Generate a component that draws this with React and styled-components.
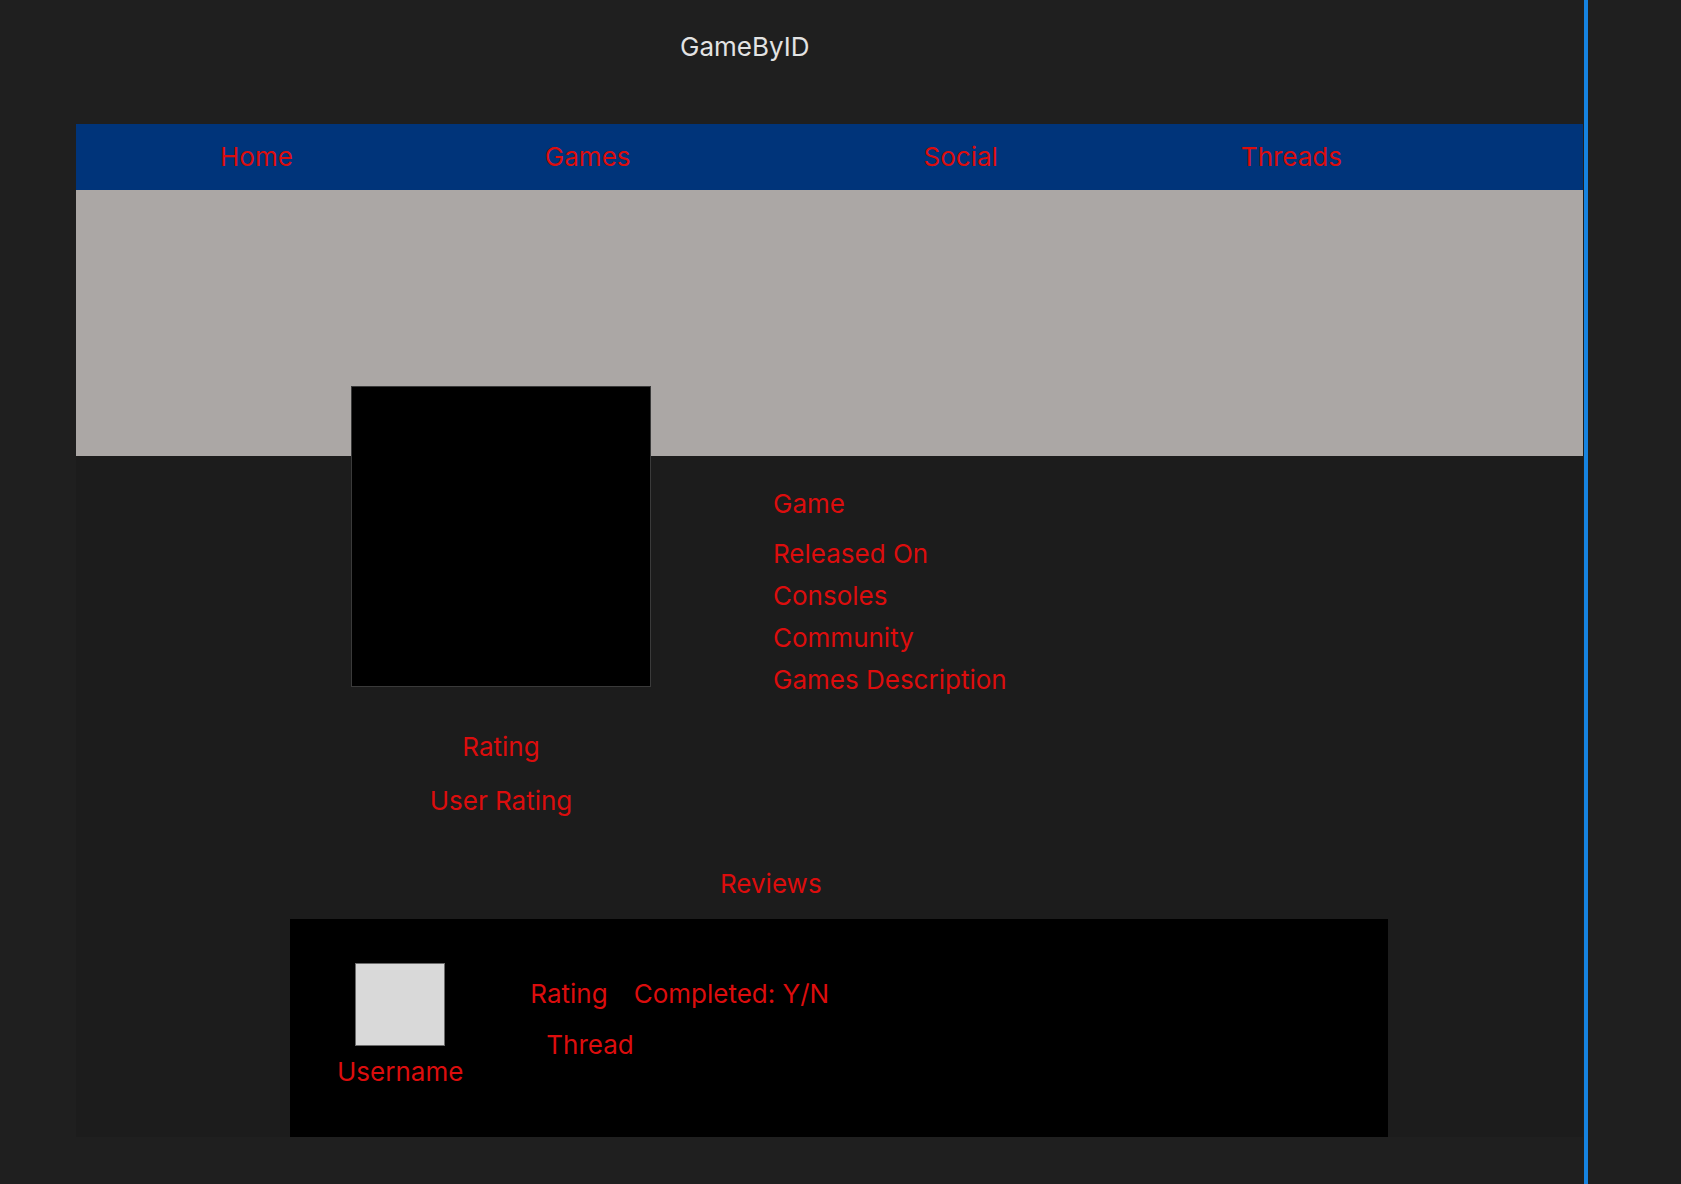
import React from "react";
import styled, { createGlobalStyle } from "styled-components";

const GlobalStyle = createGlobalStyle`
  html, body {
    margin: 0;
    padding: 0;
    background: #1f1f1f;
  }
  body {
    font-family: Inter, "Noto Sans", Arial, sans-serif;
  }
`;

const Page = styled.div`
  display: flex;
  min-height: 100vh;
`;

const Column = styled.div`
  width: 1507px;
  margin-left: 76px;
  display: flex;
  flex-direction: column;
`;

const SelectionLine = styled.div`
  width: 4px;
  margin-left: 1px;
  background: #1683e0;
  align-self: stretch;
`;

const Header = styled.header`
  height: 124px;
  box-sizing: border-box;
  padding: 31px 0 0 604px;
`;

const Title = styled.h1`
  margin: 0;
  font-size: 26px;
  line-height: 32px;
  font-weight: 400;
  color: #e3e3e3;
`;

const Frame = styled.main`
  background: #1c1c1c;
  display: flex;
  flex-direction: column;
`;

const NavBar = styled.nav`
  height: 66px;
  background: #00347a;
  display: flex;
  align-items: center;
  padding-left: 144px;
`;

const NavLink = styled.a`
  color: #dc0d0d;
  font-size: 26px;
  line-height: 32px;
  text-decoration: none;
  margin-left: ${(p) => p.$space || 0}px;
`;

const Banner = styled.div`
  height: 266px;
  background: #aba7a5;
`;

const Detail = styled.section`
  display: flex;
  align-items: flex-start;
  margin-top: -70px;
  padding-left: 275px;
`;

const CoverColumn = styled.div`
  display: flex;
  flex-direction: column;
  align-items: center;
  width: 300px;
`;

const Cover = styled.div`
  width: 300px;
  height: 301px;
  box-sizing: border-box;
  background: #000;
  border: 1px solid #3a3a3a;
`;

const Label = styled.div`
  color: #dc0d0d;
  font-size: 26px;
  line-height: 32px;
  margin-top: ${(p) => p.$top || 0}px;
  padding-left: ${(p) => p.$indent || 0}px;
  white-space: nowrap;
`;

const InfoList = styled.div`
  display: flex;
  flex-direction: column;
  margin-left: 122px;
  padding-top: 97px;
`;

const InfoItem = styled.div`
  color: #dc0d0d;
  font-size: 26px;
  line-height: 42px;
  margin-bottom: ${(p) => (p.$lead ? 8 : 0)}px;
`;

const ReviewsHeading = styled.h2`
  margin: 51px 0 0;
  padding-left: 644px;
  font-size: 26px;
  line-height: 32px;
  font-weight: 400;
  color: #dc0d0d;
`;

const ReviewCard = styled.article`
  margin: 19px 0 0 214px;
  width: 1098px;
  height: 218px;
  box-sizing: border-box;
  background: #000;
  display: flex;
  align-items: flex-start;
  padding: 44px 0 0 47px;
`;

const UserColumn = styled.div`
  display: flex;
  flex-direction: column;
  align-items: center;
  gap: 10px;
`;

const Avatar = styled.div`
  width: 90px;
  height: 83px;
  box-sizing: border-box;
  background: #d9d9d9;
  border: 1px solid #6b6b6b;
`;

const ReviewBody = styled.div`
  margin-left: 67px;
  padding-top: 15px;
  display: flex;
  flex-direction: column;
`;

const ReviewRow = styled.div`
  display: flex;
  gap: 26px;
`;

export default function App() {
  return (
    <>
      <GlobalStyle />
      <Page>
        <Column>
          <Header>
            <Title>GameByID</Title>
          </Header>
          <Frame>
            <NavBar>
              <NavLink href="#">Home</NavLink>
              <NavLink href="#" $space={252}>Games</NavLink>
              <NavLink href="#" $space={293}>Social</NavLink>
              <NavLink href="#" $space={243}>Threads</NavLink>
            </NavBar>
            <Banner />
            <Detail>
              <CoverColumn>
                <Cover />
                <Label $top={44}>Rating</Label>
                <Label $top={22}>User Rating</Label>
              </CoverColumn>
              <InfoList>
                <InfoItem $lead>Game</InfoItem>
                <InfoItem>Released On</InfoItem>
                <InfoItem>Consoles</InfoItem>
                <InfoItem>Community</InfoItem>
                <InfoItem>Games Description</InfoItem>
              </InfoList>
            </Detail>
            <ReviewsHeading>Reviews</ReviewsHeading>
            <ReviewCard>
              <UserColumn>
                <Avatar />
                <Label>Username</Label>
              </UserColumn>
              <ReviewBody>
                <ReviewRow>
                  <Label>Rating</Label>
                  <Label>Completed: Y/N</Label>
                </ReviewRow>
                <Label $top={19} $indent={16}>Thread</Label>
              </ReviewBody>
            </ReviewCard>
          </Frame>
        </Column>
        <SelectionLine />
      </Page>
    </>
  );
}
